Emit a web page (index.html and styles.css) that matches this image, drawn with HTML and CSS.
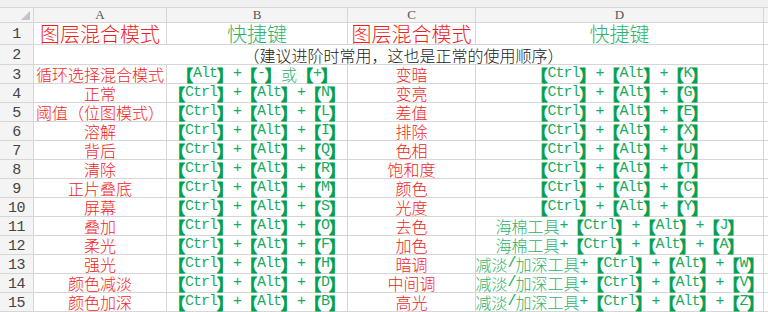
FILE: index.html
```html
<!DOCTYPE html>
<html lang="zh-CN">
<head>
<meta charset="utf-8">
<title>图层混合模式快捷键</title>
<link rel="stylesheet" href="styles.css">
</head>
<body>
<div class="sheet">
  <div class="strip"></div>

  <div class="hd corner"><span class="tri"></span></div>
  <div class="hd">A</div><div class="hd">B</div><div class="hd">C</div><div class="hd">D</div><div class="hd"></div>

  <div class="rn">1</div>
  <div class="c big red">图层混合模式</div>
  <div class="c big grnt">快捷键</div>
  <div class="c big red">图层混合模式</div>
  <div class="c big grnt">快捷键</div>
  <div class="c"></div>

  <div class="rn">2</div>
  <div class="c note span4">（建议进阶时常用，这也是正常的使用顺序）</div>
  <div class="c"></div>

  <div class="rn">3</div>
  <div class="c red">循环选择混合模式</div>
  <div class="c grn">【<span class="l">Alt</span>】<span class="l">+</span>【<span class="l">-</span>】<span class="t">或</span>【<span class="l">+</span>】</div>
  <div class="c red">变暗</div>
  <div class="c grn">【<span class="l">Ctrl</span>】<span class="l">+</span>【<span class="l">Alt</span>】<span class="l">+</span>【<span class="l">K</span>】</div>
  <div class="c"></div>

  <div class="rn">4</div>
  <div class="c red">正常</div>
  <div class="c grn">【<span class="l">Ctrl</span>】<span class="l">+</span>【<span class="l">Alt</span>】<span class="l">+</span>【<span class="l">N</span>】</div>
  <div class="c red">变亮</div>
  <div class="c grn">【<span class="l">Ctrl</span>】<span class="l">+</span>【<span class="l">Alt</span>】<span class="l">+</span>【<span class="l">G</span>】</div>
  <div class="c"></div>

  <div class="rn">5</div>
  <div class="c red">阈值（位图模式）</div>
  <div class="c grn">【<span class="l">Ctrl</span>】<span class="l">+</span>【<span class="l">Alt</span>】<span class="l">+</span>【<span class="l">L</span>】</div>
  <div class="c red">差值</div>
  <div class="c grn">【<span class="l">Ctrl</span>】<span class="l">+</span>【<span class="l">Alt</span>】<span class="l">+</span>【<span class="l">E</span>】</div>
  <div class="c"></div>

  <div class="rn">6</div>
  <div class="c red">溶解</div>
  <div class="c grn">【<span class="l">Ctrl</span>】<span class="l">+</span>【<span class="l">Alt</span>】<span class="l">+</span>【<span class="l">I</span>】</div>
  <div class="c red">排除</div>
  <div class="c grn">【<span class="l">Ctrl</span>】<span class="l">+</span>【<span class="l">Alt</span>】<span class="l">+</span>【<span class="l">X</span>】</div>
  <div class="c"></div>

  <div class="rn">7</div>
  <div class="c red">背后</div>
  <div class="c grn">【<span class="l">Ctrl</span>】<span class="l">+</span>【<span class="l">Alt</span>】<span class="l">+</span>【<span class="l">Q</span>】</div>
  <div class="c red">色相</div>
  <div class="c grn">【<span class="l">Ctrl</span>】<span class="l">+</span>【<span class="l">Alt</span>】<span class="l">+</span>【<span class="l">U</span>】</div>
  <div class="c"></div>

  <div class="rn">8</div>
  <div class="c red">清除</div>
  <div class="c grn">【<span class="l">Ctrl</span>】<span class="l">+</span>【<span class="l">Alt</span>】<span class="l">+</span>【<span class="l">R</span>】</div>
  <div class="c red">饱和度</div>
  <div class="c grn">【<span class="l">Ctrl</span>】<span class="l">+</span>【<span class="l">Alt</span>】<span class="l">+</span>【<span class="l">T</span>】</div>
  <div class="c"></div>

  <div class="rn">9</div>
  <div class="c red">正片叠底</div>
  <div class="c grn">【<span class="l">Ctrl</span>】<span class="l">+</span>【<span class="l">Alt</span>】<span class="l">+</span>【<span class="l">M</span>】</div>
  <div class="c red">颜色</div>
  <div class="c grn">【<span class="l">Ctrl</span>】<span class="l">+</span>【<span class="l">Alt</span>】<span class="l">+</span>【<span class="l">C</span>】</div>
  <div class="c"></div>

  <div class="rn">10</div>
  <div class="c red">屏幕</div>
  <div class="c grn">【<span class="l">Ctrl</span>】<span class="l">+</span>【<span class="l">Alt</span>】<span class="l">+</span>【<span class="l">S</span>】</div>
  <div class="c red">光度</div>
  <div class="c grn">【<span class="l">Ctrl</span>】<span class="l">+</span>【<span class="l">Alt</span>】<span class="l">+</span>【<span class="l">Y</span>】</div>
  <div class="c"></div>

  <div class="rn">11</div>
  <div class="c red">叠加</div>
  <div class="c grn">【<span class="l">Ctrl</span>】<span class="l">+</span>【<span class="l">Alt</span>】<span class="l">+</span>【<span class="l">O</span>】</div>
  <div class="c red">去色</div>
  <div class="c grn"><span class="t">海棉工具</span><span class="l">+</span>【<span class="l">Ctrl</span>】<span class="l">+</span>【<span class="l">Alt</span>】<span class="l">+</span>【<span class="l">J</span>】</div>
  <div class="c"></div>

  <div class="rn">12</div>
  <div class="c red">柔光</div>
  <div class="c grn">【<span class="l">Ctrl</span>】<span class="l">+</span>【<span class="l">Alt</span>】<span class="l">+</span>【<span class="l">F</span>】</div>
  <div class="c red">加色</div>
  <div class="c grn"><span class="t">海棉工具</span><span class="l">+</span>【<span class="l">Ctrl</span>】<span class="l">+</span>【<span class="l">Alt</span>】<span class="l">+</span>【<span class="l">A</span>】</div>
  <div class="c"></div>

  <div class="rn">13</div>
  <div class="c red">强光</div>
  <div class="c grn">【<span class="l">Ctrl</span>】<span class="l">+</span>【<span class="l">Alt</span>】<span class="l">+</span>【<span class="l">H</span>】</div>
  <div class="c red">暗调</div>
  <div class="c grn"><span class="t">减淡</span><span class="l">/</span><span class="t">加深工具</span><span class="l">+</span>【<span class="l">Ctrl</span>】<span class="l">+</span>【<span class="l">Alt</span>】<span class="l">+</span>【<span class="l">W</span>】</div>
  <div class="c"></div>

  <div class="rn">14</div>
  <div class="c red">颜色减淡</div>
  <div class="c grn">【<span class="l">Ctrl</span>】<span class="l">+</span>【<span class="l">Alt</span>】<span class="l">+</span>【<span class="l">D</span>】</div>
  <div class="c red">中间调</div>
  <div class="c grn"><span class="t">减淡</span><span class="l">/</span><span class="t">加深工具</span><span class="l">+</span>【<span class="l">Ctrl</span>】<span class="l">+</span>【<span class="l">Alt</span>】<span class="l">+</span>【<span class="l">V</span>】</div>
  <div class="c"></div>

  <div class="rn">15</div>
  <div class="c red">颜色加深</div>
  <div class="c grn">【<span class="l">Ctrl</span>】<span class="l">+</span>【<span class="l">Alt</span>】<span class="l">+</span>【<span class="l">B</span>】</div>
  <div class="c red">高光</div>
  <div class="c grn"><span class="t">减淡</span><span class="l">/</span><span class="t">加深工具</span><span class="l">+</span>【<span class="l">Ctrl</span>】<span class="l">+</span>【<span class="l">Alt</span>】<span class="l">+</span>【<span class="l">Z</span>】</div>
  <div class="c"></div>
</div>
</body>
</html>
```

FILE: styles.css
```css
html, body {
  margin: 0;
  padding: 0;
  background: #ffffff;
}

.sheet {
  width: 768px;
  height: 312px;
  overflow: hidden;
  display: grid;
  grid-template-columns: 33px 132px 180px 127px 287px 1fr;
  grid-template-rows: 7px 14px 21px 19px repeat(13, 18px);
  gap: 1px;
  background: #d6d6d6;
  font-family: "Noto Sans CJK SC", sans-serif;
  font-weight: 300;
}

.strip {
  grid-column: 1 / -1;
  background: #f0f0f0;
}

.hd {
  background: #f4f4f4;
  color: #555555;
  font-family: "Liberation Serif", serif;
  font-size: 13px;
  line-height: 14px;
  display: flex;
  align-items: center;
  justify-content: center;
}

.corner {
  justify-content: flex-end;
  align-items: flex-end;
  padding: 0 3px 2px 0;
}

.tri {
  width: 0;
  height: 0;
  border-style: solid;
  border-width: 0 0 9px 9px;
  border-color: transparent transparent #c4c4c4 transparent;
}

.rn {
  background: #f4f4f4;
  color: #444444;
  font-family: "Liberation Mono", monospace;
  font-size: 15px;
  letter-spacing: -0.5px;
  display: flex;
  align-items: center;
  justify-content: center;
  padding-top: 2px;
  box-sizing: border-box;
}

.c {
  background: #ffffff;
  display: flex;
  align-items: center;
  justify-content: center;
  white-space: nowrap;
  font-size: 16px;
  line-height: 18px;
}

.big {
  font-size: 20px;
  line-height: 21px;
}

.span4 {
  grid-column: span 4;
}

.note {
  color: #222222;
  padding-left: 10px;
}

.red {
  color: #f21c1c;
}

.grnt {
  color: #2bb36a;
}

.grn {
  color: #00a04c;
  font-weight: 700;
  -webkit-text-stroke: 0.8px #00a04c;
}

.t {
  color: #2bb36a;
  font-weight: 300;
  -webkit-text-stroke: 0;
}

.l {
  color: #18ab5e;
  font-family: "Liberation Mono", monospace;
  font-weight: 400;
  font-size: 15px;
  letter-spacing: -1px;
  -webkit-text-stroke: 0;
}
```
